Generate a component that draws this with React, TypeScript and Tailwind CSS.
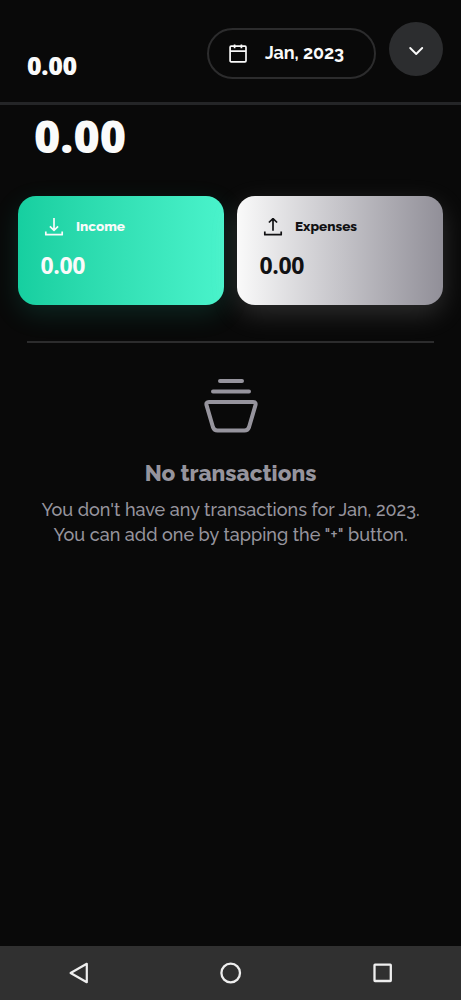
import type { ReactNode } from "react";

const label = "font-['Raleway','Lato','Open_Sans',sans-serif] whitespace-nowrap";
const amount = "font-['Open_Sans','Noto_Sans',sans-serif] whitespace-nowrap leading-none";

function CalendarIcon() {
  return (
    <svg width="20" height="20" viewBox="0 0 20 20" fill="none" stroke="#fafafa" strokeWidth="1.7" strokeLinejoin="round" className="-mt-px shrink-0">
      <rect x="2.1" y="3.2" width="15.9" height="15.6" rx="1" />
      <path d="M2 8.1H18M6.6 1.4V5.2M13.4 1.4V5.2" />
    </svg>
  );
}

function TrayIcon({ up }: { up?: boolean }) {
  return (
    <svg width="20" height="20" viewBox="0 0 20 20" fill="none" stroke="currentColor" strokeWidth="1.7" strokeLinejoin="round" className="mt-1 shrink-0">
      <path d="M1.8 13.4V16.7H18.2V13.4" />
      {up ? <path d="M10 12.8V.8M5.9 4.5L10 .6L14.1 4.5" /> : <path d="M10 -.6V12.2M5.9 8.4L10 12.3L14.1 8.4" />}
    </svg>
  );
}

function BasketIcon() {
  return (
    <svg width="56" height="56" viewBox="0 0 56 56" fill="none" stroke="#96949d" strokeWidth="4" strokeLinecap="round" strokeLinejoin="round">
      <path d="M17 3H39M10 13.5H46" />
      <path d="M6 24H50Q53.4 24 52.4 27.4L46 49.2Q44.8 52.4 41.5 52.4H14.5Q11.2 52.4 10 49.2L3.6 27.4Q2.6 24 6 24Z" />
    </svg>
  );
}

function SummaryCard({ className, title, icon }: { className: string; title: string; icon: ReactNode }) {
  return (
    <section className={`h-[109px] flex-1 rounded-[18px] pl-[22px] pt-5 ${className}`}>
      <div className="flex h-5 items-center gap-3 pl-1">
        {icon}
        <span className={`${label} text-[13.5px] font-extrabold leading-5`}>{title}</span>
      </div>
      <div className={`${amount} mt-[18px] pl-[0.4px] text-[23px] font-bold tracking-[-0.3px]`}>0.00</div>
    </section>
  );
}

export default function App() {
  return (
    <div className="flex h-[1000px] w-full flex-col overflow-hidden bg-[#090909] text-[#fafafa]">
      <header className="flex h-[105px] shrink-0 items-start border-b-[3px] border-[#242527] pl-[27px] pr-[18px]">
        <div className={`${amount} mt-[53px] text-[25px] font-extrabold tracking-[-0.3px]`}>0.00</div>
        <button className="ml-auto mt-7 flex h-[51px] w-[169px] items-center gap-[17px] rounded-full border-2 border-[#2c2c2d] pl-[19px]">
          <CalendarIcon />
          <span className={`${label} -mt-[2px] text-[18px] font-bold leading-none tracking-[-0.08px]`}>Jan, 2023</span>
        </button>
        <button className="ml-[13px] mt-[22px] flex size-[54px] items-center justify-center rounded-full bg-[#2c2d2f]">
          <svg width="16" height="10" viewBox="0 0 16 10" fill="none" stroke="#fafafa" strokeWidth="1.9" strokeLinecap="round" strokeLinejoin="round" className="mt-[3px]">
            <path d="M2.2 2L8.2 8L14.2 2" />
          </svg>
        </button>
      </header>
      <main className="flex min-h-0 flex-1 flex-col">
        <div className={`${amount} ml-[34px] mt-2 h-[46px] text-[45px] font-extrabold`}>0.00</div>
        <div className="mx-[18px] mt-[37px] flex gap-[13px]">
          <SummaryCard
            title="Income"
            icon={<TrayIcon />}
            className="bg-linear-to-r from-[#16cfa0] to-[#49f3cb] shadow-[0_9px_27px_rgba(32,210,165,0.15)]"
          />
          <SummaryCard
            title="Expenses"
            icon={<TrayIcon up />}
            className="bg-linear-to-r from-[#fafafa] via-[#c5c4c9] to-[#918f98] text-[#111113] shadow-[0_9px_27px_rgba(220,220,220,0.17)]"
          />
        </div>
        <div className="mx-[27px] mt-9 h-0.5 shrink-0 bg-[#2c2c2d]" />
        <section className="mt-[35px] flex flex-col items-center text-[#96949d]">
          <BasketIcon />
          <h2 className={`${label} mt-[25px] text-[22.5px] font-extrabold leading-7`}>No transactions</h2>
          <p className={`${label} mt-2.5 text-[18px] font-medium leading-[25px]`}>You don't have any transactions for Jan, 2023.</p>
          <p className={`${label} text-[18px] font-medium leading-[25px]`}>You can add one by tapping the "+" button.</p>
        </section>
      </main>
      <nav className="grid h-[54px] shrink-0 grid-cols-[157px_147px_157px] place-items-center bg-[#303030]">
        <svg width="24" height="24" viewBox="0 0 24 24" fill="none" stroke="#eeeeee" strokeWidth="2.2" strokeLinejoin="round">
          <path d="M19.8 2.8V21.2L3.6 12Z" />
        </svg>
        <svg width="24" height="24" viewBox="0 0 24 24" fill="none" stroke="#eeeeee" strokeWidth="2.3">
          <circle cx="11.7" cy="12" r="9.3" />
        </svg>
        <svg width="24" height="24" viewBox="0 0 24 24" fill="none" stroke="#eeeeee" strokeWidth="2.3">
          <rect x="3.5" y="3.7" width="16.3" height="16.3" rx="0.5" />
        </svg>
      </nav>
    </div>
  );
}
